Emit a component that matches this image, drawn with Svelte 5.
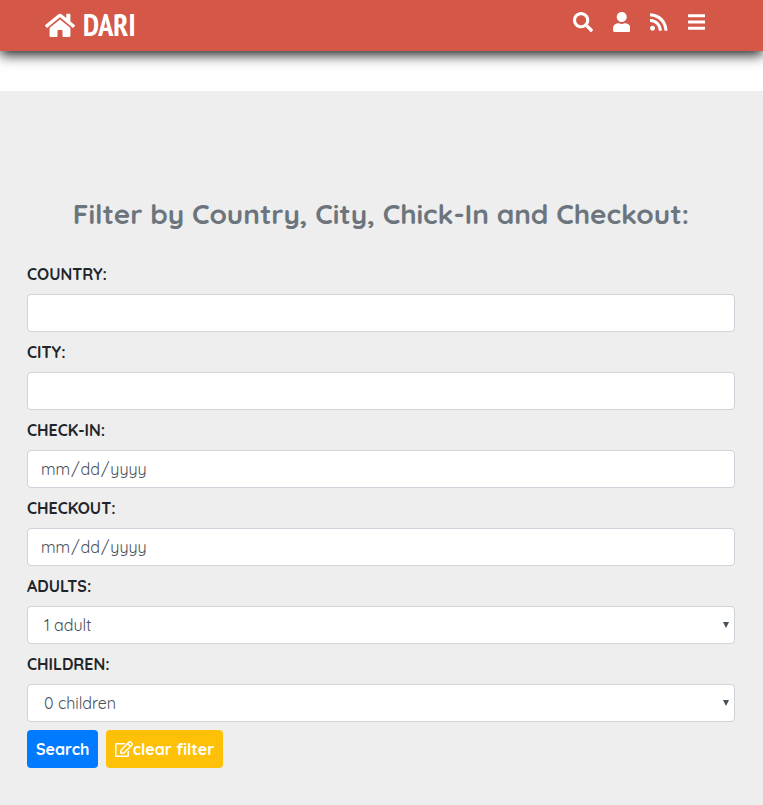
<script>
  const actions = [
    { name: 'Search', box: '0 0 512 512', width: 20, d: 'M505 442.7L405.3 343c-4.5-4.5-10.6-7-17-7H372c27.6-35.3 44-79.7 44-128C416 93.1 322.9 0 208 0S0 93.1 0 208s93.1 208 208 208c48.3 0 92.7-16.4 128-44v16.3c0 6.4 2.5 12.5 7 17l99.7 99.7c9.4 9.4 24.6 9.4 33.9 0l28.3-28.3c9.4-9.4 9.4-24.6.1-34zM208 336c-70.7 0-128-57.2-128-128 0-70.7 57.2-128 128-128 70.7 0 128 57.2 128 128 0 70.7-57.2 128-128 128z' },
    { name: 'Account', box: '0 0 448 512', width: 17.5, d: 'M224 256c70.7 0 128-57.3 128-128S294.7 0 224 0 96 57.3 96 128s57.3 128 128 128zm89.6 32h-16.7c-22.2 10.2-46.9 16-72.9 16s-50.6-5.8-72.9-16h-16.7C60.2 288 0 348.2 0 422.4V464c0 26.5 21.5 48 48 48h352c26.5 0 48-21.5 48-48v-41.6c0-74.2-60.2-134.4-134.4-134.4z' },
    { name: 'Feed', box: '0 0 448 512', width: 17.5, d: 'M128.081 415.959c0 35.369-28.672 64.041-64.041 64.041S0 451.328 0 415.959s28.672-64.041 64.041-64.041 64.04 28.673 64.04 64.041zm175.66 47.25c-8.354-154.6-132.185-278.587-286.95-286.95C7.656 175.765 0 183.105 0 192.253v48.069c0 8.415 6.49 15.472 14.887 16.018 111.832 7.284 201.473 96.702 208.772 208.772.547 8.397 7.604 14.887 16.018 14.887h48.069c9.149.001 16.489-7.655 15.995-16.79zm144.249.288C439.596 229.677 251.465 40.445 16.503 32.01 7.473 31.686 0 38.981 0 48.016v48.068c0 8.625 6.835 15.645 15.453 15.999 191.179 7.839 344.627 161.316 352.465 352.465.353 8.618 7.373 15.453 15.999 15.453h48.068c9.034-.001 16.329-7.474 16.005-16.504z' },
    { name: 'Menu', box: '0 0 448 512', width: 17.5, d: 'M16 132h416c8.837 0 16-7.163 16-16V76c0-8.837-7.163-16-16-16H16C7.163 60 0 67.163 0 76v40c0 8.837 7.163 16 16 16zm0 160h416c8.837 0 16-7.163 16-16v-40c0-8.837-7.163-16-16-16H16c-8.837 0-16 7.163-16 16v40c0 8.837 7.163 16 16 16zm0 160h416c8.837 0 16-7.163 16-16v-40c0-8.837-7.163-16-16-16H16c-8.837 0-16 7.163-16 16v40c0 8.837 7.163 16 16 16z' }
  ];
</script>

<header>
  <a class="brand" href="#home">
    <svg viewBox="0 0 576 512" width="30" height="26.67"><path d="M488 312.7V456c0 13.3-10.7 24-24 24H348c-6.6 0-12-5.4-12-12V356c0-6.6-5.4-12-12-12h-72c-6.6 0-12 5.4-12 12v112c0 6.6-5.4 12-12 12H112c-13.3 0-24-10.7-24-24V312.7c0-3.6 1.6-7 4.4-9.3l188-154.8c4.4-3.6 10.8-3.6 15.3 0l188 154.8c2.7 2.3 4.3 5.7 4.3 9.3zm83.6-60.9L488 182.9V44.4c0-6.6-5.4-12-12-12h-56c-6.6 0-12 5.4-12 12V117l-89.5-73.7c-17.7-14.6-43.3-14.6-61 0L4.4 251.8c-5.1 4.2-5.8 11.8-1.6 16.9l25.5 31c4.2 5.1 11.8 5.8 16.9 1.6l235.2-193.7c4.4-3.6 10.8-3.6 15.3 0l235.2 193.7c5.1 4.2 12.7 3.5 16.9-1.6l25.5-31c4.2-5.2 3.4-12.7-1.7-16.9z" /></svg>
    <span>DARI</span>
  </a>
  <nav>
    {#each actions as a}
      <a href="#top" aria-label={a.name}><svg viewBox={a.box} width={a.width} height="20"><path d={a.d} /></svg></a>
    {/each}
  </nav>
</header>

<main>
  <h3>Filter by Country, City, Chick-In and Checkout:</h3>
  <form>
    <label for="country">COUNTRY:</label>
    <input id="country" type="text" />
    <label for="city">CITY:</label>
    <input id="city" type="text" />
    <label for="checkin">CHECK-IN:</label>
    <input id="checkin" type="date" />
    <label for="checkout">CHECKOUT:</label>
    <input id="checkout" type="date" />
    <label for="adults">ADULTS:</label>
    <div class="pick">
      <select id="adults"><option>1 adult</option></select>
      <i></i>
    </div>
    <label for="children">CHILDREN:</label>
    <div class="pick">
      <select id="children"><option>0 children</option></select>
      <i></i>
    </div>
    <div class="buttons">
      <button type="button" class="search">Search</button>
      <button type="button" class="clear">
        <svg viewBox="0 0 576 512" width="18" height="16"><path d="M402.3 344.9l32-32c5-5 13.7-1.5 13.7 5.7V464c0 26.5-21.5 48-48 48H48c-26.5 0-48-21.5-48-48V112c0-26.5 21.5-48 48-48h273.5c7.1 0 10.7 8.6 5.7 13.7l-32 32c-1.5 1.5-3.5 2.3-5.7 2.3H48v352h352V350.5c0-2.1.8-4.1 2.3-5.6zm156.6-201.8L296.3 405.7l-90.4 10c-26.2 2.9-48.5-19.2-45.6-45.6l10-90.4L432.9 17.1c22.9-22.9 59.9-22.9 82.7 0l43.2 43.2c22.9 22.9 22.9 60 .1 82.8zM460.1 174L402 115.9 216.2 301.8l-7.3 65.3 65.3-7.3L460.1 174zm64.8-79.7l-43.2-43.2c-4.1-4.1-10.8-4.1-14.8 0L436 82l58.1 58.1 30.9-30.9c4-4.2 4-10.8-.1-14.9z" /></svg>
        <span>clear filter</span>
      </button>
    </div>
  </form>
</main>

<style>
  :global(body) { margin: 0; background: #fff; overflow: hidden; }
  header, main { box-sizing: border-box; font-family: Quicksand, Lato, sans-serif; }
  header {
    position: relative;
    display: flex;
    justify-content: space-between;
    height: 51px;
    padding: 0 58px 0 45px;
    background: #d45748;
    box-shadow: 0 4px 12px 0 #222;
  }
  svg { display: block; fill: currentColor; flex: none; }
  a { color: #fff; text-decoration: none; }
  .brand { display: flex; align-items: center; gap: 8px; height: 50px; }
  .brand span {
    font: 700 30px/40px 'PT Sans Narrow', 'Open Sans', sans-serif;
    white-space: nowrap;
  }
  nav { display: flex; gap: 20px; padding-top: 11.7px; }
  main { height: 714px; margin-top: 40px; padding: 106px 28px 0 27px; background: #eee; }
  h3 {
    margin: 0;
    height: 34px;
    color: #6c757d;
    font-size: 28px;
    line-height: 34px;
    font-weight: 700;
    text-align: center;
    white-space: nowrap;
    letter-spacing: -0.04px;
  }
  form { display: flex; flex-direction: column; padding-top: 31px; }
  label {
    height: 24px;
    margin-bottom: 8px;
    color: #212529;
    font-size: 16px;
    line-height: 24px;
    font-weight: 700;
  }
  input, select {
    box-sizing: border-box;
    display: block;
    width: 100%;
    height: 38px;
    margin: 0;
    padding: 6px 12px;
    border: 1px solid #ced4da;
    border-radius: 4px;
    background: #fff;
    color: #495057;
    font: 400 16px/24px Quicksand, Lato, sans-serif;
    appearance: none;
  }
  input::-webkit-calendar-picker-indicator { display: none; }
  input, .pick { margin-bottom: 8px; }
  select { padding-left: 16px; }
  #adults { letter-spacing: -0.1px; }
  .pick { position: relative; }
  .pick i {
    position: absolute;
    right: 6px;
    top: 16px;
    border: 3px solid transparent;
    border-top: 6px solid #495057;
    border-bottom: 0;
  }
  .buttons { display: flex; gap: 8px; }
  button {
    display: flex;
    align-items: center;
    box-sizing: border-box;
    height: 38px;
    padding: 0 9px;
    border: 0;
    border-radius: 4px;
    color: #fff;
    font: 700 16px/24px Quicksand, Lato, sans-serif;
    white-space: nowrap;
  }
  .search { width: 71px; background: #007bff; }
  .clear { width: 117px; padding-left: 8.8px; background: #ffc107; }
</style>
